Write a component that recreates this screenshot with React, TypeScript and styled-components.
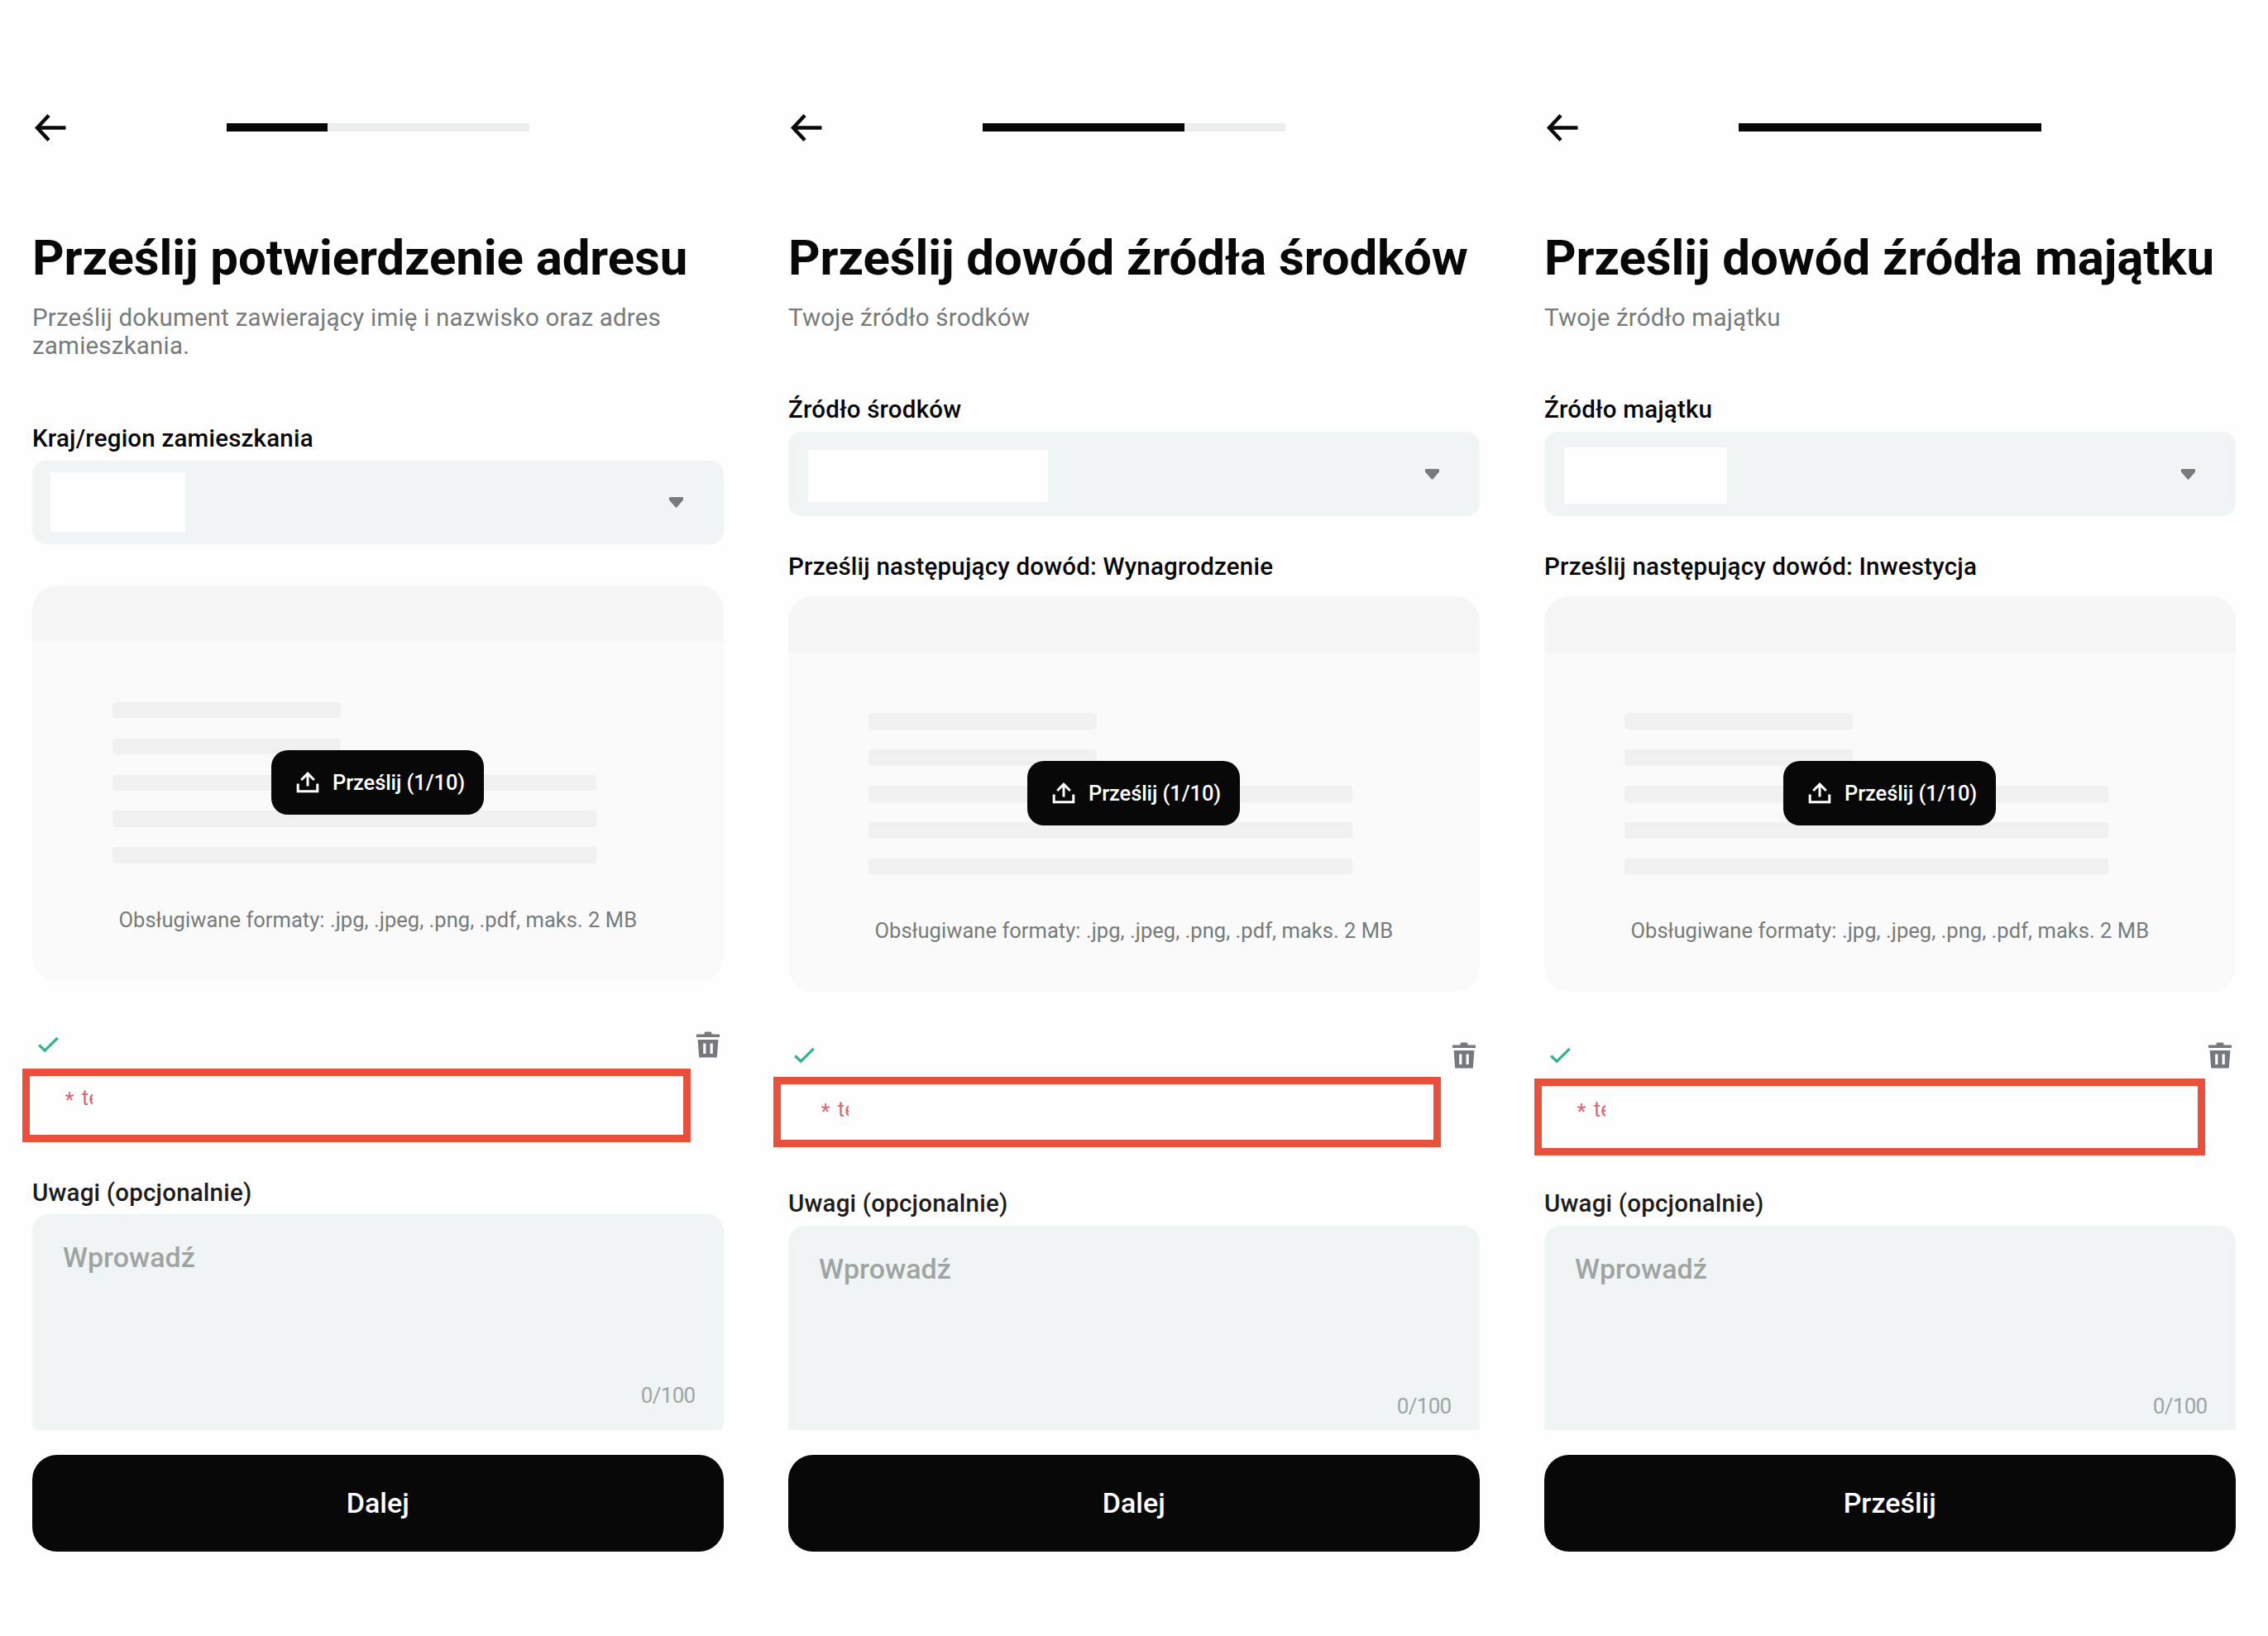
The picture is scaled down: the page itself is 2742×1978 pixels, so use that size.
import styled, { createGlobalStyle } from "styled-components";

const GlobalStyle = createGlobalStyle`
	* {
		box-sizing: border-box;
	}
	body {
		margin: 0;
		background-color: #fefefe;
		font-family: Roboto, "Liberation Sans", sans-serif;
		color: #080808;
	}
	h1, p {
		margin: 0;
	}
	svg {
		display: block;
	}
`;

const Page = styled.main`
	display: grid;
	grid-template-columns: repeat(3, 914px);
	width: 2742px;
	height: 1978px;
	overflow: hidden;
`;

const Screen = styled.section`
	display: flex;
	flex-direction: column;
	height: 1978px;
	padding: 0 39.5px 0 39px;
`;

const TopBar = styled.header`
	display: flex;
	align-items: center;
	height: 70px;
	margin-top: 119px;
	flex-shrink: 0;
`;

const BackButton = styled.button`
	width: 48px;
	height: 48px;
	padding: 0;
	border: 0;
	background: none;
`;

const Progress = styled.div`
	width: 366px;
	height: 10px;
	margin-left: 187px;
	background-color: #eceeed;
`;

const ProgressFill = styled.div<{ $step: number }>`
	width: ${(props) => props.$step * 122}px;
	height: 10px;
	background-color: #080808;
`;

/* everything between the top bar and the footer, cut off at the bottom */
const Content = styled.div`
	height: 1540px;
	padding: 86.5px 39.5px 0 39px;
	margin: 0 -39.5px 0 -39px;
	overflow: hidden;
	flex-shrink: 0;
`;

const Title = styled.h1`
	font-size: 60px;
	font-weight: 700;
	line-height: 72px;
	letter-spacing: -0.1px;
	white-space: nowrap;
`;

const Subtitle = styled.p`
	margin-top: 19px;
	font-size: 29.5px;
	line-height: 34.4px;
	letter-spacing: 0.2px;
	color: #777b7a;
`;

const Label = styled.p<{ $top: number }>`
	margin-top: ${(props) => props.$top}px;
	font-size: 29.5px;
	font-weight: 500;
	line-height: 36px;
	letter-spacing: 0.2px;
	white-space: nowrap;
`;

const Select = styled.div`
	display: flex;
	align-items: flex-start;
	justify-content: space-between;
	height: 101.5px;
	margin-top: 9px;
	padding-right: 49px;
	border-radius: 16px;
	background-color: #eff5f4;
`;

const SelectValue = styled.div<{
	$left: number;
	$top: number;
	$width: number;
	$height: number;
}>`
	width: ${(props) => props.$width}px;
	height: ${(props) => props.$height}px;
	margin: ${(props) => props.$top}px 0 0 ${(props) => props.$left}px;
	background-color: #fefefe;
`;

const Caret = styled.svg`
	width: 17px;
	height: 13px;
	margin-top: 44.5px;
`;

const UploadCard = styled.div<{ $top: number }>`
	position: relative;
	height: 478px;
	margin-top: ${(props) => props.$top}px;
	border-radius: 30px;
	background-color: #fafafa;
	overflow: hidden;
`;

const CardHead = styled.div`
	height: 68px;
	background-color: #f6f6f6;
`;

const Lines = styled.div`
	display: flex;
	flex-direction: column;
	gap: 24.4px;
	padding: 73px 0 0 97px;
`;

const Line = styled.div<{ $short?: boolean }>`
	width: ${(props) => (props.$short ? 275.5 : 585)}px;
	height: 19.5px;
	border-radius: 4px;
	background-color: #f0f0f0;
`;

const UploadButton = styled.button`
	position: absolute;
	top: 199px;
	left: 289px;
	display: flex;
	align-items: center;
	width: 257px;
	height: 78px;
	padding: 0 0 0 28px;
	border: 0;
	border-radius: 20px;
	background-color: #080808;
	color: #fff;
	font-family: inherit;
	font-size: 25.5px;
	font-weight: 500;
	letter-spacing: -0.1px;
	white-space: nowrap;

	svg {
		margin-right: 14px;
	}
`;

const Formats = styled.p`
	margin-top: 52px;
	font-size: 25.5px;
	line-height: 32px;
	letter-spacing: 0.04px;
	text-align: center;
	color: #777b7a;
`;

const FileRow = styled.div`
	display: flex;
	align-items: center;
	justify-content: space-between;
	height: 40px;
	margin-top: 57px;
	padding: 0 5px 0 6px;
`;

const ErrorBlock = styled.div`
	position: relative;
	height: 32px;
	margin-top: 28.5px;
`;

const ErrorText = styled.p<{ $width: number }>`
	width: ${(props) => props.$width}px;
	margin-left: 39.5px;
	font-size: 25.5px;
	line-height: 32px;
	word-spacing: 3px;
	color: #d9657a;
	white-space: nowrap;
	overflow: hidden;
`;

const Star = styled.span`
	line-height: 20px;
	vertical-align: -3px;
`;

/* red frame drawn over the error message */
const Highlight = styled.div<{
	$left: number;
	$top: number;
	$width: number;
	$height: number;
}>`
	position: absolute;
	left: ${(props) => props.$left}px;
	top: ${(props) => props.$top}px;
	width: ${(props) => props.$width}px;
	height: ${(props) => props.$height}px;
	border: 9.5px solid #e94f3d;
`;

const NotesLabel = styled(Label)`
	color: #1c1c1c;
`;

const Notes = styled.div`
	height: 270px;
	margin-top: 8.5px;
	padding: 32px 34px 0 37px;
	border-radius: 20px;
	background-color: #eff5f4;
`;

const Placeholder = styled.p`
	height: 171.5px;
	font-size: 34px;
	font-weight: 500;
	line-height: 40px;
	color: #9fa4a3;
`;

const Counter = styled.p`
	font-size: 26px;
	line-height: 30px;
	letter-spacing: -0.7px;
	text-align: right;
	color: #9fa4a3;
`;

const SubmitButton = styled.button`
	height: 117px;
	margin-top: 29.5px;
	padding: 0;
	border: 0;
	border-radius: 30px;
	background-color: #080808;
	color: #fff;
	font-family: inherit;
	font-size: 34px;
	font-weight: 500;
	flex-shrink: 0;
`;

interface Box {
	left: number;
	top: number;
	width: number;
	height: number;
}

interface Step {
	step: number;
	title: string;
	subtitle: string;
	selectLabel: string;
	value: Box;
	proof?: string;
	highlight: Box;
	errorWidth: number;
	submit: string;
}

const steps: Step[] = [
	{
		step: 1,
		title: "Prześlij potwierdzenie adresu",
		subtitle:
			"Prześlij dokument zawierający imię i nazwisko oraz adres zamieszkania.",
		selectLabel: "Kraj/region zamieszkania",
		value: { left: 22, top: 14, width: 163, height: 72.5 },
		highlight: { left: -12.5, top: -19, width: 808.5, height: 89 },
		errorWidth: 33,
		submit: "Dalej",
	},
	{
		step: 2,
		title: "Prześlij dowód źródła środków",
		subtitle: "Twoje źródło środków",
		selectLabel: "Źródło środków",
		value: { left: 23.5, top: 21.5, width: 290.5, height: 63 },
		proof: "Prześlij następujący dowód: Wynagrodzenie",
		highlight: { left: -18.5, top: -23, width: 807, height: 85 },
		errorWidth: 33,
		submit: "Dalej",
	},
	{
		step: 3,
		title: "Prześlij dowód źródła majątku",
		subtitle: "Twoje źródło majątku",
		selectLabel: "Źródło majątku",
		value: { left: 23.5, top: 18.5, width: 197, height: 68 },
		proof: "Prześlij następujący dowód: Inwestycja",
		highlight: { left: -12, top: -21, width: 810.5, height: 93 },
		errorWidth: 34,
		submit: "Prześlij",
	},
];

function BackIcon() {
	return (
		<svg width="48" height="48" viewBox="0 0 48 48" fill="none">
			<path
				d="M20 9.5L6 24.5L20 39.5M6 24.5H40.5"
				stroke="#080808"
				strokeWidth="4.4"
			/>
		</svg>
	);
}

function UploadIcon() {
	return (
		<svg width="32" height="32" viewBox="0 0 32 32" fill="none">
			<path
				d="M4.2 17.5V26.8H27.8V17.5M16 20.5V5.5M8.2 13L16 5.2L23.8 13"
				stroke="#fff"
				strokeWidth="3"
			/>
		</svg>
	);
}

function CheckIcon() {
	return (
		<svg width="28" height="24" viewBox="0 0 28 24" fill="none">
			<path d="M2.2 12.5L9.2 19.2L24.6 4" stroke="#35b292" strokeWidth="3.2" />
		</svg>
	);
}

function TrashIcon() {
	return (
		<svg width="28" height="32" viewBox="0 0 28 32">
			<path
				d="M9.5 3.5V2Q9.5 .5 11 .5H17Q18.5 .5 18.5 2V3.5H28V7H0V3.5Z"
				fill="#75787c"
			/>
			<path
				fillRule="evenodd"
				d="M1.6 10H26.4L24.8 31.5H3.2ZM8.2 14.5V27H11.4V14.5ZM16.6 14.5V27H19.8V14.5Z"
				fill="#75787c"
			/>
		</svg>
	);
}

function UploadStep({ data }: { data: Step }) {
	const { value, highlight } = data;

	return (
		<Screen>
			<TopBar>
				<BackButton>
					<BackIcon />
				</BackButton>
				<Progress>
					<ProgressFill $step={data.step} />
				</Progress>
			</TopBar>
			<Content>
				<Title>{data.title}</Title>
				<Subtitle>{data.subtitle}</Subtitle>
				<Label $top={76.5}>{data.selectLabel}</Label>
				<Select>
					<SelectValue
						$left={value.left}
						$top={value.top}
						$width={value.width}
						$height={value.height}
					/>
					<Caret viewBox="0 0 17 13">
						<path
							d="M1 0H16Q17 0 17 1V3.6L9.2 12.4Q8.5 13 7.8 12.4L0 3.6V1Q0 0 1 0Z"
							fill="#777b7a"
						/>
					</Caret>
				</Select>
				{data.proof && <Label $top={43.5}>{data.proof}</Label>}
				<UploadCard $top={data.proof ? 18 : 49.5}>
					<CardHead />
					<Lines>
						<Line $short />
						<Line $short />
						<Line />
						<Line />
						<Line />
					</Lines>
					<Formats>Obsługiwane formaty: .jpg, .jpeg, .png, .pdf, maks. 2 MB</Formats>
					<UploadButton>
						<UploadIcon />
						Prześlij (1/10)
					</UploadButton>
				</UploadCard>
				<FileRow>
					<CheckIcon />
					<TrashIcon />
				</FileRow>
				<ErrorBlock>
					<ErrorText $width={data.errorWidth}>
						<Star>*</Star> te
					</ErrorText>
					<Highlight
						$left={highlight.left}
						$top={highlight.top}
						$width={highlight.width}
						$height={highlight.height}
					/>
				</ErrorBlock>
				<NotesLabel $top={80.5}>Uwagi (opcjonalnie)</NotesLabel>
				<Notes>
					<Placeholder>Wprowadź</Placeholder>
					<Counter>0/100</Counter>
				</Notes>
			</Content>
			<SubmitButton>{data.submit}</SubmitButton>
		</Screen>
	);
}

function App() {
	return (
		<>
			<GlobalStyle />
			<Page>
				{steps.map((step) => (
					<UploadStep key={step.step} data={step} />
				))}
			</Page>
		</>
	);
}

export default App;
